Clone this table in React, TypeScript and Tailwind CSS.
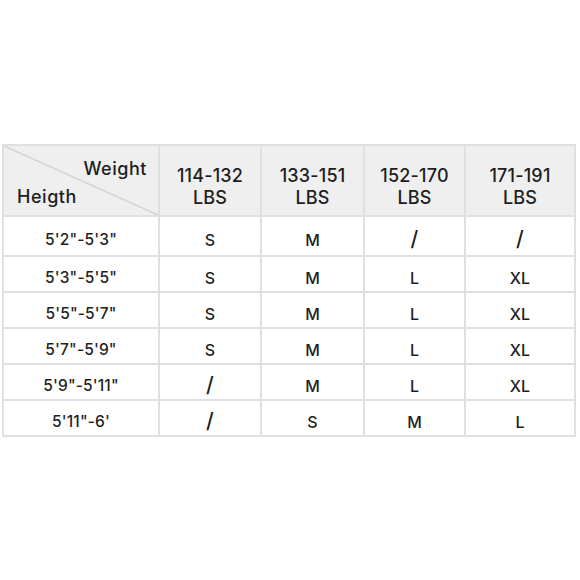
const headers = ["114-132", "133-151", "152-170", "171-191"];

const rows: { height: string; sizes: string[] }[] = [
  { height: "5'2\"-5'3\"", sizes: ["S", "M", "/", "/"] },
  { height: "5'3\"-5'5\"", sizes: ["S", "M", "L", "XL"] },
  { height: "5'5\"-5'7\"", sizes: ["S", "M", "L", "XL"] },
  { height: "5'7\"-5'9\"", sizes: ["S", "M", "L", "XL"] },
  { height: "5'9\"-5'11\"", sizes: ["/", "M", "L", "XL"] },
  { height: "5'11\"-6'", sizes: ["/", "S", "M", "L"] },
];

export default function App() {
  return (
    <main className="flex min-h-screen w-full items-center bg-white pl-[2px] font-['Inter',sans-serif] font-medium text-[#1e1e1e]">
      <table className="w-[572px] table-fixed border-collapse">
        <colgroup>
          <col className="w-[156px]" />
          <col className="w-[102px]" />
          <col className="w-[103px]" />
          <col className="w-[101px]" />
          <col className="w-[110px]" />
        </colgroup>
        <thead>
          <tr className="h-[71px] bg-[#efefef]">
            <th className="relative border-2 border-[#e0e0e0] p-0 font-medium">
              <svg
                className="absolute inset-0 h-full w-full"
                viewBox="0 0 100 100"
                preserveAspectRatio="none"
              >
                <line
                  x1="0"
                  y1="0"
                  x2="100"
                  y2="100"
                  stroke="#d2d2d2"
                  strokeWidth="1.5"
                  vectorEffect="non-scaling-stroke"
                />
              </svg>
              <div className="relative flex h-full flex-col pl-[13px] pr-[11px] pt-[6px] text-[18px] leading-[26px] tracking-[0.03em]">
                <span className="self-end">Weight</span>
                <span className="self-start pt-[2px]">Heigth</span>
              </div>
            </th>
            {headers.map((h) => (
              <th
                key={h}
                className="border-2 border-[#e0e0e0] p-0 pt-[14px] text-center text-[18px] font-medium leading-[22px] tracking-[0.01em]"
              >
                <div>{h}</div>
                <div>LBS</div>
              </th>
            ))}
          </tr>
        </thead>
        <tbody>
          {rows.map((row, i) => (
            <tr key={row.height} className={i === 0 ? "h-[40px]" : "h-[36px]"}>
              <td className="border-2 border-[#e0e0e0] p-0 pt-[9px] text-center text-[15.5px] tracking-[0.01em]">
                {row.height}
              </td>
              {row.sizes.map((s, j) => (
                <td
                  key={j}
                  className="border-2 border-[#e0e0e0] p-0 pt-[9px] text-center text-[16px]"
                >
                  {s === "/" ? (
                    <span className="inline-block text-[21px] leading-none">/</span>
                  ) : (
                    s
                  )}
                </td>
              ))}
            </tr>
          ))}
        </tbody>
      </table>
    </main>
  );
}
